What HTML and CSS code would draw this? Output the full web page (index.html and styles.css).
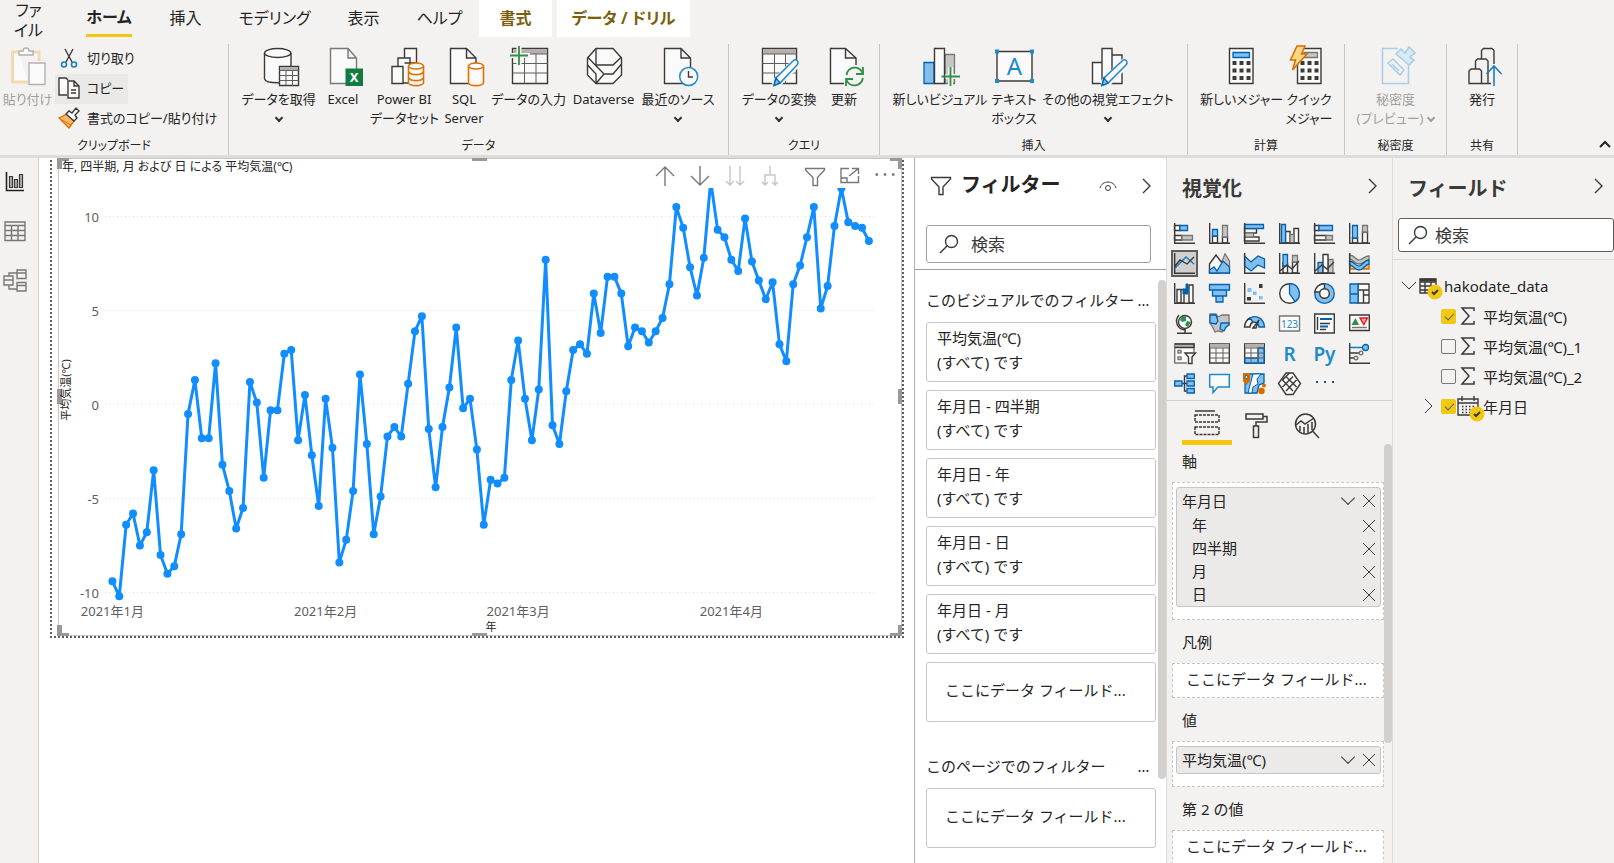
FILE: index.html
```html
<!DOCTYPE html>
<html lang="ja">
<head>
    <meta charset="UTF-8">
    <meta name="viewport" content="width=device-width, initial-scale=1.0">
    <title>hakodate_data - レポート</title>
    <link rel="stylesheet" href="styles.css">
</head>
<body>
    <header class="ribbon">
        <nav class="tabs">
            <button class="tab file">ファ<br>イル</button>
            <button class="tab active"><span>ホーム</span></button>
            <button class="tab">挿入</button>
            <button class="tab">モデリング</button>
            <button class="tab">表示</button>
            <button class="tab">ヘルプ</button>
            <button class="tab context">書式</button>
            <button class="tab context">データ / ドリル</button>
        </nav>
        <div class="groups">
            <section class="group g-clip">
                <div class="group-body">
                    <button class="cmd disabled">
                        <svg viewBox="0 0 40 40"><path class="paste" d="M11 5H4.500V35H20M25 5H31V14"/><path class="off" d="M11 8V4H15C15 0 21 0 21 4H25V8ZM21 16H37V37.500H21Z"/></svg>
                        貼り付け
                    </button>
                    <div class="clip-list">
                        <button class="small">
                            <svg viewBox="0 0 20 20"><path class="k" d="M6 1L13 14M14 1L7 14"/><circle class="bl" cx="5" cy="16.500" r="2.500"/><circle class="bl" cx="15" cy="16.500" r="2.500"/></svg>切り取り
                        </button>
                        <button class="small hover">
                            <svg viewBox="0 0 20 20"><path class="w" d="M8 17H0V0H7L9 2M9 3H15L20 8V20H9ZM15 3V8H20"/><path class="k" d="M12 12H17M12 15H17"/></svg>コピー
                        </button>
                        <button class="small">
                            <svg viewBox="0 0 20 20"><path class="or" d="M0 10L8 6L15 13L10 20Z"/><path class="w" d="M7 6L10 3L13 5L17 0L20 3L16 7L18 10L15 13Z"/><path class="ol thin-ol" d="M3 12L12 17"/></svg>書式のコピー/貼り付け
                        </button>
                    </div>
                </div>
                <h2>クリップボード</h2>
            </section>
            <section class="group g-data">
                <div class="group-body">
                    <button class="cmd">
                        <svg viewBox="0 0 40 40"><path class="w" d="M5.500 6V32C7 37 30 37 32 32V6"/><ellipse class="w" cx="18.700" cy="6" rx="13.200" ry="4.500"/><path class="w" d="M20.500 19.500H39.500V38.500H20.500Z"/><path class="gh" d="M21 20H39V23H21Z"/><path class="k thin" d="M20.500 23.500H39.500M20.500 28.500H39.500M20.500 33.500H39.500M27 23.500V38.500M33.500 23.500V38.500"/></svg>
                        データを取得<i class="down"></i>
                    </button>
                    <button class="cmd">
                        <svg viewBox="0 0 40 40"><path class="w gray" d="M7.500 1.500H25L33.500 11V36.500H7.500ZM25 1.500V11H33.500"/><path class="excel" d="M22.500 21.500H40V39H22.500Z"/><text class="xl" x="31.200" y="35">X</text></svg>
                        Excel
                    </button>
                    <button class="cmd">
                        <svg viewBox="0 0 40 40"><path class="w" d="M20.500 11V1.500H32.500V16H20.500M14 19V11H26V36H19M8 19.500H19V36.500H8Z"/><path class="or2" d="M24.500 19V36C26 39.500 38 39.500 39.500 36V19"/><ellipse class="or2" cx="32" cy="19" rx="7.500" ry="3"/><path class="ol" d="M24.500 25C27 28.500 37 28.500 39.500 25M24.500 31C27 34.500 37 34.500 39.500 31"/></svg>
                        Power BI<br>データセット
                    </button>
                    <button class="cmd">
                        <svg viewBox="0 0 40 40"><path class="w" d="M6.500 1.500H22.500L32 11V36.500H6.500ZM22.500 1.500V11H32"/><path class="or2" d="M24.500 19V36C26 39.500 38 39.500 39.500 36V19"/><ellipse class="or2" cx="32" cy="19" rx="7.500" ry="3"/></svg>
                        SQL<br>Server
                    </button>
                    <button class="cmd">
                        <svg viewBox="0 0 40 40"><path class="w" d="M3.500 1.500H38.500V36.500H3.500Z"/><path class="gh" d="M4 2H38V7H4Z"/><path class="k thin" d="M3.500 7H38.500M3.500 16.500H38.500M3.500 26H38.500M15.500 7V36.500M27 7V36.500"/><path class="halo" d="M10 -1V19M0 8.500H21"/><path class="gr" d="M10 -1V18M1 8.500H19"/></svg>
                        データの入力
                    </button>
                    <button class="cmd">
                        <svg viewBox="0 0 40 40"><path class="w" d="M12 1.500H29L37.500 11V28L29 36.500H12L3.500 28V11Z"/><path class="k" d="M12 1.500V18H29L37.500 10M3.500 10L20 27L12 36.500M20 27H29L37.500 17M3.500 18L12 27V36"/></svg>
                        Dataverse
                    </button>
                    <button class="cmd">
                        <svg viewBox="0 0 40 40"><path class="w" d="M6.500 1.500H23L32.500 11V36.500H6.500ZM23 1.500V11H32.500"/><circle class="wb" cx="30.700" cy="29.500" r="9"/><path class="k" d="M30.500 24V30H35"/></svg>
                        最近のソース<i class="down"></i>
                    </button>
                </div>
                <h2>データ</h2>
            </section>
            <section class="group g-query">
                <div class="group-body">
                    <button class="cmd">
                        <svg viewBox="0 0 40 40"><path class="w" d="M3.500 1.500H37.500V36.500H3.500Z"/><path class="gh" d="M4 2H37V7H4Z"/><path class="k thin" d="M3.500 7H37.500M3.500 16.500H37.500M3.500 26H37.500M15.500 7V36.500M26.500 7V36.500"/><path class="halo2" d="M15 38.500L38 15"/><path class="wb" d="M15 38.500L17 31L34 14C37 11 41 15 38 18L21 36Z"/><path class="bf" d="M15 38.500L17 31L21 36Z"/></svg>
                        データの変換<i class="down"></i>
                    </button>
                    <button class="cmd">
                        <svg viewBox="0 0 40 40"><path class="w" d="M20 36.500H6.500V1.500H21.500L32 11V18M21.500 1.500V11H32"/><path class="gr" d="M22.500 28C24 19 35 18 38.500 26M39 20V27H32M39 31C37 40 26 41 22.500 33M22 39V32H29"/></svg>
                        更新
                    </button>
                </div>
                <h2>クエリ</h2>
            </section>
            <section class="group g-insert">
                <div class="group-body">
                    <button class="cmd">
                        <svg viewBox="0 0 40 40"><path class="gf gray" d="M25 7.500H34.500V36.500H25Z"/><path class="bf" d="M4 15.500H14V36.500H4Z"/><path class="w" d="M14.500 1.500H24.500V36.500H14.500Z"/><path class="halo" d="M30.500 20V39M25.500 29.500H40"/><path class="gr" d="M30.500 20V39M21.500 29.500H40"/></svg>
                        新しいビジュアル
                    </button>
                    <button class="cmd">
                        <svg viewBox="0 0 40 40"><path class="w" d="M3 4.500H38V34H3Z"/><path class="sq" d="M1 2.500H5V6.500H1ZM36 2.500H40V6.500H36ZM1 32H5V36H1ZM36 32H40V36H36Z"/><text class="ta" x="20.500" y="27.500">A</text></svg>
                        テキスト<br>ボックス
                    </button>
                    <button class="cmd">
                        <svg viewBox="0 0 40 40"><path class="w" d="M4.500 15.500H14V36.500H4.500ZM24 8H34V36.500H24ZM14 1.500H24V36.500H14Z"/><path class="halo2" d="M15 38.500L38 15"/><path class="wb" d="M14 38.500L16 31L34 14C37 11 41 15 38 18L20 36Z"/><path class="bf" d="M14 38.500L16 31L20 36Z"/></svg>
                        その他の視覚エフェクト<i class="down"></i>
                    </button>
                </div>
                <h2>挿入</h2>
            </section>
            <section class="group g-calc">
                <div class="group-body">
                    <button class="cmd">
                        <svg viewBox="0 0 40 40"><path class="w" d="M8.500 1.500H32V36.500H8.500Z"/><path class="bf" d="M12 5.500H28.500V10.500H12Z"/><path class="dots" d="M11.500 16H29.500M11.500 23.500H29.500M11.500 31H29.500"/></svg>
                        新しいメジャー
                    </button>
                    <button class="cmd">
                        <svg viewBox="0 0 40 40"><path class="w" d="M8.500 1.500H32V36.500H8.500Z"/><path class="gf gray" d="M15 5.500H28.500V10.500H15Z"/><path class="dots" d="M11.500 16H29.500M11.500 23.500H29.500M11.500 31H29.500"/><path class="bolt" d="M8 -1H16L12.500 7H18L3.500 23L6.500 13H1.500Z"/></svg>
                        クイック<br>メジャー
                    </button>
                </div>
                <h2>計算</h2>
            </section>
            <section class="group g-sens">
                <div class="group-body">
                    <button class="cmd disabled">
                        <svg viewBox="0 0 40 40"><path class="pale" d="M22 1.500H6.500V36.500H32.500V18M12 16L17 12L28 23L24 28ZM16 17L23 24"/><path class="palef" d="M20 7L25 2L29 6L33 0L39 6L34 10L38 13L33 18Z"/></svg>
                        秘密度<br>(プレビュー)<i class="down inline"></i>
                    </button>
                </div>
                <h2>秘密度</h2>
            </section>
            <section class="group g-share">
                <div class="group-body">
                    <button class="cmd">
                        <svg viewBox="0 0 40 40"><path class="k" d="M19.500 12V3.500L21.500 1.500H30L32 3.500V17M13.500 22V14L15.500 12H24L26 14V36.500M19.500 36.500H29"/><path class="k" d="M7 36.500V24L9 22H17.500L19.500 24V36.500Z"/><path class="bl" d="M32 39V19M24.500 27L32 19L39.500 27"/></svg>
                        発行
                    </button>
                </div>
                <h2>共有</h2>
            </section>
            <button class="collapse" aria-label="リボンを折りたたむ"><svg viewBox="0 0 12 8"><path d="M1 7L6 2L11 7"/></svg></button>
        </div>
    </header>

    <main class="workspace">
        <nav class="rail">
            <button aria-label="レポート"><svg viewBox="0 0 24 24"><path class="rk" d="M3.500 2V20.500H21"/><path class="rg" d="M6.500 6.500H9.500V17.500H6.500ZM11.500 9.500H14.500V17.500H11.500ZM16.500 4.500H19.500V17.500H16.500Z"/></svg></button>
            <button aria-label="データ"><svg viewBox="0 0 24 24"><path class="rm" d="M2 3H22V21.500H2ZM2 6.500H22M2 11.500H22M2 16.500H22M8.500 6.500V21.500M15 6.500V21.500"/></svg></button>
            <button aria-label="モデル"><svg viewBox="0 0 24 24"><path class="rm" d="M1 8H10V17H1ZM1 12H10M14 2H23V10.500H14ZM14 5H23M14 14.500H23V23H14ZM14 17.500H23M6 8V5H14M6 17V21H14"/></svg></button>
        </nav>

        <section class="canvas">
            <div class="visual">
                <svg id="chart" viewBox="0 0 856 481"></svg>
                <div class="visual-tools">
                    <button aria-label="ドリルアップ"><svg viewBox="0 0 24 24"><path d="M12 21V2M3 11L12 2L21 11"/></svg></button>
                    <button aria-label="ドリルダウン"><svg viewBox="0 0 24 24"><path d="M12 1V20M3 11L12 20L21 11"/></svg></button>
                    <button class="faint" aria-label="次のレベル"><svg viewBox="0 0 24 24"><path d="M7 1V20M3 16L7 20L11 16M17 1V20M13 16L17 20L21 16"/></svg></button>
                    <button class="faint" aria-label="展開"><svg viewBox="0 0 24 24"><path d="M12 1V10M7 20V10H17V20M4 17L7 20L10 17M14 17L17 20L20 17"/></svg></button>
                    <button class="apart" aria-label="フィルター"><svg viewBox="0 0 24 24"><path d="M2.500 3.500H21.500V5L14.500 12.500V20.500H10V12.500L2.500 5Z"/></svg></button>
                    <button aria-label="フォーカス モード"><svg viewBox="0 0 24 24"><path d="M11 3.500H3V17.500H20.500V11M3 13H9V17.500M11 11L20.500 3.500M14 3.500H20.500V9"/></svg></button>
                    <button aria-label="その他のオプション"><svg viewBox="0 0 24 24"><path class="dot3" d="M2.500 9.500H5M10.800 9.500H13.200M19 9.500H21.500"/></svg></button>
                </div>
            </div>
        </section>

        <aside class="filters">
            <div class="filters-head">
                <svg class="ic-funnel" viewBox="0 0 22 20"><path d="M1.500 1.500H20.500V3L13 11V18.500H9V11L1.500 3Z"/></svg>
                <h2>フィルター</h2>
                <button class="eye" aria-label="表示"><svg viewBox="0 0 18 12"><path d="M1 8C3 0 15 0 17 8"/><circle cx="9" cy="8" r="2.500"/></svg></button>
                <button class="chev" aria-label="閉じる"><svg viewBox="0 0 10 16"><path d="M1 1L8 8L1 15"/></svg></button>
            </div>
            <label class="search">
                <svg viewBox="0 0 20 20"><circle cx="12.500" cy="7.500" r="6"/><path d="M8 12L1 19"/></svg>
                <input type="text" placeholder="検索" aria-label="検索">
            </label>
            <div class="filters-body">
                <div class="filters-title"><h3>このビジュアルでのフィルター</h3><button aria-label="その他">…</button></div>
                <div class="card"><p>平均気温(℃)</p><p>(すべて) です</p></div>
                <div class="card"><p>年月日 - 四半期</p><p>(すべて) です</p></div>
                <div class="card"><p>年月日 - 年</p><p>(すべて) です</p></div>
                <div class="card"><p>年月日 - 日</p><p>(すべて) です</p></div>
                <div class="card"><p>年月日 - 月</p><p>(すべて) です</p></div>
                <div class="card drop">ここにデータ フィールド...</div>
                <div class="filters-title second"><h3>このページでのフィルター</h3><button aria-label="その他">…</button></div>
                <div class="card drop">ここにデータ フィールド...</div>
                <div class="thumb"></div>
            </div>
        </aside>

        <aside class="viz">
            <div class="pane-head"><h2>視覚化</h2><button class="chev" aria-label="閉じる"><svg viewBox="0 0 10 16"><path d="M1 1L8 8L1 15"/></svg></button></div>
            <div class="gallery">
                <button><svg viewBox="0 0 21 21"><path class="w" d="M.5 2.500H6V7.500H.5ZM.5 12.500H8V17H.5Z"/><path class="bf" d="M6 2.500H13.500V7.500H6Z"/><path class="gf gray" d="M8 12.500H18.500V17H8Z"/><path class="k" d="M.7 0V20.300H21"/></svg></button>
                <button><svg viewBox="0 0 21 21"><path class="w" d="M3.500 13H8.500V20H3.500ZM13.500 14H18.500V20H13.500Z"/><path class="bf" d="M3.500 6.500H8.500V13H3.500Z"/><path class="gf gray" d="M13.500 2.500H18.500V14H13.500Z"/><path class="k" d="M.7 0V20.300H21"/></svg></button>
                <button><svg viewBox="0 0 21 21"><path class="w" d="M.5 5.500H12.500V10H.5ZM.5 14H15V18H.5Z"/><path class="gf gray" d="M.5 10H9.500V14H.5Z"/><path class="bf" d="M.5 1.500H19.500V5.500H.5Z"/><path class="k" d="M.7 0V20.300H21"/></svg></button>
                <button><svg viewBox="0 0 21 21"><path class="w" d="M6.500 8.500H11V20H6.500ZM15 5.500H19.500V20H15Z"/><path class="gf gray" d="M11 11.500H15V20H11Z"/><path class="bf" d="M2.500 1.500H6.500V20H2.500Z"/><path class="k" d="M.7 0V20.300H21"/></svg></button>
                <button><svg viewBox="0 0 21 21"><path class="w" d="M.5 2.500H5V7.500H.5ZM.5 12.500H12V17H.5Z"/><path class="bf" d="M5 2.500H18.500V7.500H5Z"/><path class="gf gray" d="M12 12.500H18.500V17H12Z"/><path class="k" d="M.7 0V20.300H21"/></svg></button>
                <button><svg viewBox="0 0 21 21"><path class="w" d="M3.500 15H8.500V20H3.500ZM13.500 9H18.500V20H13.500Z"/><path class="bf" d="M3.500 2.500H8.500V15H3.500Z"/><path class="gf gray" d="M13.500 2.500H18.500V9H13.500Z"/><path class="k" d="M.7 0V20.300H21"/></svg></button>

                <button class="selected"><svg viewBox="0 0 21 21"><path class="bl" d="M1 15L12 4L20 11"/><path class="k" d="M1 13L6 7L13 11L20 4M.7 0V20.300H21"/></svg></button>
                <button><svg viewBox="0 0 21 21"><path class="gf gray" d="M8 20L16 1L20.500 8V20Z"/><path class="w" d="M.5 11L7 2L16 14L10 20H.5Z"/><path class="bf" d="M.5 20V17L5 14L8 18L14 8L20.500 14V20Z"/></svg></button>
                <button><svg viewBox="0 0 21 21"><path class="bf" d="M.5 3L7 9L14 3L20.500 6V15L14 12L7 18L.5 13Z"/><path class="k" d="M.7 0V20.300H21"/></svg></button>
                <button><svg viewBox="0 0 21 21"><path class="w" d="M4 10H8.500V20H4ZM13.500 9H18.500V20H13.500Z"/><path class="bf" d="M4 1.500H8.500V13H4Z"/><path class="gf gray" d="M13.500 2.500H18.500V9H13.500Z"/><path class="k" d="M1 18L8 12L13 16L20 8M.7 0V20.300H21"/></svg></button>
                <button><svg viewBox="0 0 21 21"><path class="bf" d="M4 9.500H9V20H4Z"/><path class="gf gray" d="M14 6.500H19V20H14Z"/><path class="w" d="M9 1.500H14V20H9Z"/><path class="k" d="M1 18L8 12L13 16L20 9M.7 0V20.300H21"/></svg></button>
                <button><svg viewBox="0 0 21 21"><path class="or" d="M1 11H6V16H1ZM14 11H20V16H14Z"/><path class="gf gray" d="M.5 2C6 2 7 8 10.500 7C14 6 16 3 20 3V7C16 7 15 11 10 11C5 11 5 7 .5 6Z"/><path class="bf" d="M.5 8C5 8 7 14 10.500 13C14 12 15 7 20 7V11C16 11 15 17 10 17C5 17 5 12 .5 12Z"/><path class="k" d="M.7 0V20.300H21"/></svg></button>

                <button><svg viewBox="0 0 21 21"><path class="w" d="M3 6.500H7V20H3ZM7 6.500H10V20H7ZM15 2H19V20H15Z"/><path class="blu" d="M9 6H12V11H9ZM12 1H14V11H12Z"/><path class="k" d="M.7 0V20.300H21"/></svg></button>
                <button><svg viewBox="0 0 21 21"><path class="bf" d="M.5 1.500H20.500V7H.5ZM3.500 7H17.500V13H3.500ZM7 13H14V19H7Z"/></svg></button>
                <button><svg viewBox="0 0 21 21"><path class="bd" d="M3.500 5H7.500V9H3.500ZM9 8.500H12.500V12H9ZM15 13H18.500V16.500H15Z"/><path class="kd" d="M15 1H18.500V5H15ZM3 14H7V17.500H3Z"/><path class="k" d="M.7 0V20.300H21"/></svg></button>
                <button><svg viewBox="0 0 21 21"><circle class="w" cx="10.500" cy="10.500" r="9.800"/><path class="bf" d="M10.500 .7A9.800 9.800 0 0 1 16 18.600L10.500 10.500Z"/></svg></button>
                <button><svg viewBox="0 0 21 21"><circle class="bf" cx="10.500" cy="10.500" r="9.800"/><path class="w" d="M10.500 .7A9.800 9.800 0 0 0 .7 9H6L10.500 5Z"/><circle class="w" cx="10.500" cy="10.500" r="4.800"/></svg></button>
                <button><svg viewBox="0 0 21 21"><path class="w" d="M9 1H20V20H9ZM9 7H20M14.500 7V20M14.500 12H20"/><path class="bf" d="M1 1H9V20H1ZM1 11H9"/></svg></button>

                <button><svg viewBox="0 0 21 21"><circle class="w" cx="11" cy="9" r="6.500"/><path class="grf" d="M8 4L12 3L12 8L8 9L6 7ZM13 8L17 9L14 14L11 12Z"/><path class="k" d="M5 2C0 8 3 17 12 17M11 17V20M3 20.200H18"/></svg></button>
                <button><svg viewBox="0 0 21 21"><path class="gf gray" d="M1 1H7L9 4L13 2H20V12L17 14L13 19L9 18L6 19L3 13L1 10Z"/><path class="bf" d="M1 2H7L9 8L7 11L1 10ZM12 10H20V12L17 14L15 18L11 16Z"/></svg></button>
                <button><svg viewBox="0 0 21 21"><path class="w" d="M.5 14C1 8 4 6 6 5L9 9C7 10 6 12 6 14Z"/><path class="bf" d="M6 5C14 1 20 7 20.500 14H15C15 10 11 9 9 9Z"/><path class="k" d="M9 15L15 7L12 15Z"/></svg></button>
                <button><svg viewBox="0 0 21 21"><path class="w gray" d="M.5 3H20.500V18H.5Z"/><text class="num" x="10.500" y="14.500">123</text></svg></button>
                <button><svg viewBox="0 0 21 21"><path class="w" d="M.7 1H20.300V20H.7Z"/><path class="k" d="M3.500 4V17M6 10.500H16M6 16.500H12"/><path class="blu2" d="M6 6H18M6 13.500H14"/></svg></button>
                <button><svg viewBox="0 0 21 21"><path class="w" d="M.7 2H20.300V17.500H.7Z"/><path class="grf" d="M2.500 12L6.500 5L10 12Z"/><path class="rd" d="M11 5H18.500L14.800 11.500Z"/><path class="k gray" d="M3 14.500H18"/></svg></button>

                <button><svg viewBox="0 0 21 21"><path class="w gray" d="M20 9V1H.7V20H13M4 7.500H7V10H4ZM4 14H7V16.500H4Z"/><path class="gh" d="M1 1H20V4H1Z"/><path class="k" d="M.7 1H20V4.500H.7"/><path class="w" d="M11 10H21.500L18 14V20.500H14.500V14Z"/></svg></button>
                <button><svg viewBox="0 0 21 21"><path class="w" d="M.7 1H20.300V20H.7Z"/><path class="gh" d="M1 1H20V4.500H1Z"/><path class="k thin" d="M.7 5H20.300M.7 10H20.300M.7 15H20.300M7 5V20M14 5V20"/></svg></button>
                <button><svg viewBox="0 0 21 21"><path class="w" d="M.7 1H20.300V20H.7Z"/><path class="gh" d="M1 1H20V4.500H1Z"/><path class="bf" d="M1 15H14V20H1ZM14 5H20V20H14Z"/><path class="k thin" d="M.7 5H20.300M.7 10H20.300M.7 15H20.300M7 5V20M14 5V20"/></svg></button>
                <button class="lang">R</button>
                <button class="lang">Py</button>
                <button><svg viewBox="0 0 21 21"><path class="k" d="M.7 0V20.300H21M1 10H10M1 15H5"/><circle class="w gray" cx="12" cy="10" r="1.800"/><circle class="w gray" cx="7" cy="15" r="1.800"/><path class="bl" d="M1 4.500H14"/><circle class="bf" cx="16.500" cy="4.500" r="3"/></svg></button>

                <button><svg viewBox="0 0 21 21"><path class="k" d="M8 10.500H13M13 3H10.500V18H13"/><path class="bf" d="M.7 8H8V13H.7ZM13 1H20.300V5.500H13ZM13 8H20.300V13H13ZM13 15.500H20.300V20H13Z"/></svg></button>
                <button><svg viewBox="0 0 21 21"><path class="wb" d="M.7 1.500H20.300V14H9L4 19.500V14H.7Z"/></svg></button>
                <button><svg viewBox="0 0 21 21"><path class="bf" d="M1 1H20V10L15 12L13 20H1Z"/><path class="w0" d="M9 1H17L13 6L14 11L9 14L8 20H4L6 12Z"/><path class="pin" d="M-1 0H6V8L2.500 12L-1 8Z"/><circle class="pin" cx="17.500" cy="18" r="3.200"/><circle class="pin" cx="20" cy="12.500" r="2"/><circle class="w0" cx="2.500" cy="4" r="1.500"/></svg></button>
                <button><svg viewBox="0 0 21 21"><path class="w" d="M7 0H14L21.500 10.500L14 21.500H7L-.5 10.500Z"/><path class="k" d="M10.500 0L3.500 7L14 18M7 3.500L17.500 14M14 3.500L3.500 14M17.500 7L7 18"/></svg></button>
                <button><svg viewBox="0 0 21 21"><path class="dot4" d="M2 9H4M10 9H12M18 9H20"/></svg></button>
            </div>
            <div class="viz-tabs">
                <button class="active" aria-label="フィールド"><svg viewBox="0 0 26 26"><path d="M1 1H21"/><path class="dash" d="M1 5H25V12H1ZM1 17H25V24.500H1Z"/></svg></button>
                <button aria-label="書式"><svg viewBox="0 0 26 26"><path d="M2 1H19V6H2ZM19 3.500H23V9H12V13M9.500 13H14.500V24.500H9.500Z"/></svg></button>
                <button aria-label="分析"><svg viewBox="0 0 26 26"><circle cx="11.500" cy="11" r="10"/><path d="M18.500 18L25 25M2 12L7 8L11 11L20 5M6 18V13M10 20V14M14 20V11M18 17V9"/></svg></button>
            </div>
            <div class="wells">
                <h3>軸</h3>
                <div class="well">
                    <div class="chip">
                        <div class="row"><span>年月日</span><button class="v" aria-label="メニュー"></button><button class="x" aria-label="削除"></button></div>
                        <div class="row child"><span>年</span><button class="x" aria-label="削除"></button></div>
                        <div class="row child"><span>四半期</span><button class="x" aria-label="削除"></button></div>
                        <div class="row child"><span>月</span><button class="x" aria-label="削除"></button></div>
                        <div class="row child"><span>日</span><button class="x" aria-label="削除"></button></div>
                    </div>
                </div>
                <h3>凡例</h3>
                <div class="well empty">ここにデータ フィールド...</div>
                <h3>値</h3>
                <div class="well">
                    <div class="chip">
                        <div class="row"><span>平均気温(℃)</span><button class="v" aria-label="メニュー"></button><button class="x" aria-label="削除"></button></div>
                    </div>
                </div>
                <h3>第 2 の値</h3>
                <div class="well empty">ここにデータ フィールド...</div>
                <div class="thumb"></div>
            </div>
        </aside>

        <aside class="fields">
            <div class="pane-head"><h2>フィールド</h2><button class="chev" aria-label="閉じる"><svg viewBox="0 0 10 16"><path d="M1 1L8 8L1 15"/></svg></button></div>
            <label class="search">
                <svg viewBox="0 0 20 20"><circle cx="12.500" cy="7.500" r="6"/><path d="M8 12L1 19"/></svg>
                <input type="text" placeholder="検索" aria-label="検索">
            </label>
            <div class="tree">
                <div class="node table">
                    <svg class="tw" viewBox="0 0 16 10"><path d="M1 1L8 8L15 1"/></svg>
                    <span class="badged"><svg class="ic-table" viewBox="0 0 18 16"><path d="M1 1H17V15H1ZM1 4H17M1 8H17M1 12H17M6 4V15M12 4V15"/><path class="top" d="M1 2H17"/></svg><svg class="badge" viewBox="0 0 16 16"><circle cx="8" cy="8" r="7.500"/><path d="M5 8L7 10L11 6"/></svg></span>
                    hakodate_data
                </div>
                <label class="node field"><input type="checkbox" checked><svg class="sigma" viewBox="0 0 14 18"><path d="M13 4V1H1L8 9L1 17H13V14"/></svg>平均気温(℃)</label>
                <label class="node field"><input type="checkbox"><svg class="sigma" viewBox="0 0 14 18"><path d="M13 4V1H1L8 9L1 17H13V14"/></svg>平均気温(℃)_1</label>
                <label class="node field"><input type="checkbox"><svg class="sigma" viewBox="0 0 14 18"><path d="M13 4V1H1L8 9L1 17H13V14"/></svg>平均気温(℃)_2</label>
                <label class="node date"><svg class="tr" viewBox="0 0 10 16"><path d="M1 1L8 8L1 15"/></svg><input type="checkbox" checked><span class="badged cal"><svg class="ic-cal" viewBox="0 0 22 20"><path d="M1 3H21V19H1ZM1 7H21M5 0V5M17 0V5"/><path class="days" d="M5 10.500H18M5 13.500H18M5 16.500H18"/></svg><svg class="badge" viewBox="0 0 16 16"><circle cx="8" cy="8" r="7.500"/><path d="M5 8L7 10L11 6"/></svg></span>年月日</label>
            </div>
        </aside>
    </main>
    <script src="script.js"></script>
</body>
</html>
```
FILE: styles.css
```css
* {
    box-sizing: border-box;
}
body {
    margin: 0;
    height: 100vh;
    display: flex;
    flex-direction: column;
    overflow: hidden;
    background: #fff;
    color: #252423;
    font-family: "Noto Sans", "Noto Sans CJK JP", sans-serif;
    font-size: 15px;
}
h2, h3, p {
    margin: 0;
    font-size: inherit;
    font-weight: normal;
}
button {
    padding: 0;
    border: none;
    background: none;
    color: inherit;
    font: inherit;
    cursor: pointer;
}
svg {
    display: block;
    fill: none;
    stroke: #3b3a38;
    overflow: visible;
}
input {
    font: inherit;
    color: inherit;
}

/* アイコンの色 */
.k { fill: none; stroke: #3b3a38; stroke-width: 1.4; }
.thin { stroke: #605e5c; stroke-width: 1; }
.w { fill: #fafafa; stroke: #3b3a38; stroke-width: 1.4; }
.w0 { fill: #fafafa; stroke: #0063b1; stroke-width: 1; }
.w.gray, .gf.gray, .k.gray { stroke: #797774; }
.wb { fill: #fafafa; stroke: #1e8bcd; stroke-width: 1.5; }
.bl { fill: none; stroke: #1a7fc0; stroke-width: 1.6; }
.bf { fill: #83beec; stroke: #0063b1; stroke-width: 1.3; }
.bd { fill: #83beec; stroke: none; }
.kd { fill: #3b3a38; stroke: none; }
.blu { fill: #0063b1; stroke: #0063b1; stroke-width: 1; }
.blu2 { stroke: #0063b1; stroke-width: 2; }
.gf { fill: #c8c6c4; stroke: #3b3a38; stroke-width: 1.3; }
.gh { fill: #b3b0ad; stroke: none; }
.gr { stroke: #309048; stroke-width: 1.8; }
.grf { fill: #309048; stroke: none; }
.rd { fill: #f8a0a0; stroke: #e02020; stroke-width: 1.4; }
.or { fill: #fbb967; stroke: #d86c00; stroke-width: 1.3; }
.or2 { fill: #fafafa; stroke: #e07000; stroke-width: 1.6; }
.ol { stroke: #e07000; stroke-width: 1.6; }
.thin-ol { stroke-width: 1; }
.bolt { fill: #fcd783; stroke: #d86c00; stroke-width: 1.5; }
.pin { fill: #d86c00; stroke: none; }
.halo { stroke: #f3f2f1; stroke-width: 5; }
.halo2 { stroke: #f3f2f1; stroke-width: 10; }
.paste { fill: #fafafa; stroke: #f3d9b0; stroke-width: 3; }
.off { fill: #fafafa; stroke: #b3b1af; stroke-width: 1.4; }
.pale { fill: none; stroke: #a9cfe6; stroke-width: 1.6; }
.palef { fill: #d9eaf4; stroke: #a9cfe6; stroke-width: 1.6; }
.excel { fill: #107c41; stroke: none; }
.sq { fill: #1e8bcd; stroke: none; }
.dots { stroke: #3b3a38; stroke-width: 4; stroke-dasharray: 4 3; }
.xl { fill: #fff; stroke: none; font-size: 13px; font-weight: bold; text-anchor: middle; }
.ta { fill: #1e8bcd; stroke: none; font-size: 24px; text-anchor: middle; }
.num { fill: #1e8bcd; stroke: none; font-size: 10px; text-anchor: middle; }

/* リボン */
.ribbon {
    flex: none;
    background: #f3f2f1;
    border-bottom: 3px solid #dddcdb;
    font-feature-settings: "palt";
}
.tabs {
    display: grid;
    grid-template-columns: 69px 80px 73px 105px 73px 79px 73px 133px;
    grid-template-rows: 37px;
}
.tab {
    font-size: 16px;
    line-height: 20px;
    padding-bottom: 2px;
    white-space: nowrap;
}
.tab.file {
    align-self: start;
    padding: 0 12px 0 0;
}
.tab.active {
    padding: 0;
    font-weight: bold;
}
.tab.active span {
    display: inline-block;
    line-height: 34px;
    border-bottom: 3px solid #f2c811;
}
.tab.context {
    background: #fff;
    color: #7a6008;
    font-weight: bold;
}
.tab.context:last-child {
    margin-left: 5px;
    margin-right: -5px;
}
.groups {
    display: flex;
    padding-top: 7px;
}
.group {
    height: 111px;
    border-right: 1px solid #c8c6c4;
    font-size: 13px;
}
.group h2 {
    font-size: 12px;
    line-height: 18px;
    text-align: center;
}
.group-body {
    display: grid;
    height: 93px;
    align-items: start;
}
.cmd {
    display: block;
    padding-top: 3px;
    line-height: 19px;
    white-space: nowrap;
    text-align: center;
}
.cmd svg {
    width: 40px;
    height: 40px;
    margin: 0 auto 3px;
}
.cmd.disabled {
    color: #a19f9d;
}
.down {
    display: block;
    width: 6px;
    height: 6px;
    margin: 6px auto 0;
    border-right: 2px solid #323130;
    border-bottom: 2px solid #323130;
    transform: rotate(45deg);
}
.down.inline {
    display: inline-block;
    margin: 0 0 2px 5px;
    border-color: #a19f9d;
}
.g-clip { width: 229px; }
.g-clip .group-body { grid-template-columns: 55px 1fr; }
.g-data { width: 500px; padding: 0 12px; }
.g-data .group-body { grid-template-columns: 75px 54px 68px 52px 77px 73px 76px; }
.g-query { width: 151px; padding: 0 12px; }
.g-query .group-body { grid-template-columns: 76px 54px; }
.g-insert { width: 308px; padding: 0 12px; }
.g-insert .group-body { grid-template-columns: 96px 52px 136px; }
.g-calc { width: 157px; padding: 0 12px; }
.g-calc .group-body { grid-template-columns: 82px 54px; }
.g-sens { width: 102px; }
.g-share { width: 71px; }
.clip-list {
    display: flex;
    flex-direction: column;
    align-items: flex-start;
}
.small {
    display: flex;
    align-items: center;
    gap: 8px;
    height: 30px;
    padding: 0 4px 3px;
    white-space: nowrap;
    font-size: 13px;
}
.small svg {
    width: 20px;
    height: 20px;
}
.small.hover {
    background: #eae9e8;
}
.collapse {
    align-self: flex-end;
    margin-left: auto;
    padding: 0 3px 7px 0;
}
.collapse svg {
    width: 12px;
    height: 8px;
    stroke: #252423;
    stroke-width: 2;
}

/* 本体 */
.workspace {
    flex: 1;
    min-height: 0;
    display: flex;
}
.rail {
    flex: none;
    width: 39px;
    padding: 12px 0 0 3px;
    background: #f3f2f1;
    border-right: 1px solid #d6d5d4;
}
.rail button {
    display: block;
    margin-bottom: 25px;
}
.rail svg {
    width: 24px;
    height: 24px;
}
.rk { stroke: #252423; stroke-width: 1.6; }
.rg { fill: #b3b0ad; stroke: #3b3a38; stroke-width: 1.2; }
.rm { stroke: #797774; stroke-width: 1.4; }
.canvas {
    flex: 1;
    min-width: 0;
    padding: 0 9px 0 10px;
}
.visual {
    position: relative;
}
.visual > svg {
    width: 100%;
    height: auto;
    overflow: hidden;
}
.visual-tools {
    position: absolute;
    top: 7px;
    right: 3px;
    display: flex;
}
.visual-tools button {
    width: 35px;
}
.visual-tools .apart {
    margin-left: 10px;
}
.visual-tools svg {
    width: 24px;
    height: 24px;
    margin: 0 auto;
    stroke: #797774;
    stroke-width: 1.4;
}
.visual-tools .faint svg {
    stroke: #c8c6c4;
}
.visual-tools .dot3 { stroke-width: 2.5; }
.dot4 { stroke: #1f4e79; stroke-width: 2; }

/* グラフ */
.frame { stroke: #c8c6c4; stroke-width: 1; }
.selection { stroke: #605e5c; stroke-width: 2; stroke-dasharray: 2 2; }
.handle { fill: #999; stroke: none; }
.chart-title { fill: #252423; stroke: none; font-size: 12px; font-feature-settings: "palt"; }
.axis-label { fill: #605e5c; stroke: none; font-size: 13px; }
.axis-title { fill: #252423; stroke: none; font-size: 11px; text-anchor: middle; font-feature-settings: "palt"; }
.end { text-anchor: end; }
.mid { text-anchor: middle; }
.grid { stroke: #e1dfdd; stroke-width: 1; stroke-dasharray: 1 3; }
.line { stroke: #118dff; stroke-width: 3; stroke-linejoin: round; }
.point { fill: #118dff; stroke: none; }

/* フィルター */
.filters {
    flex: none;
    width: 252px;
    display: flex;
    flex-direction: column;
    border-left: 1px solid #b3b0ad;
    background: #fff;
}
.filters-head {
    display: flex;
    align-items: center;
    height: 56px;
    padding: 0 14px 0 15px;
}
.filters-head h2, .pane-head h2 {
    flex: 1;
    font-size: 20px;
    line-height: 28px;
    font-weight: bold;
}
.filters-head h2 {
    margin: 0 0 2px 9px;
}
.ic-funnel {
    width: 22px;
    height: 20px;
    stroke-width: 1.4;
}
.eye svg {
    width: 18px;
    height: 12px;
}
.eye {
    margin-right: 25px;
}
.chev svg {
    width: 10px;
    height: 16px;
    stroke-width: 1.4;
}
.search {
    display: flex;
    align-items: center;
    border: 1px solid #a19f9d;
    border-radius: 3px;
    background: #fff;
}
.search svg {
    flex: none;
    width: 20px;
    height: 20px;
    stroke-width: 1.4;
}
.search input {
    flex: 1;
    min-width: 0;
    padding: 0;
    border: none;
    outline: none;
    background: none;
    font-size: 17px;
}
.search input::placeholder {
    color: #3b3a39;
}
.filters .search {
    height: 38px;
    margin: 11px 15px 6px 11px;
    padding-left: 12px;
    gap: 12px;
}
.filters-body {
    position: relative;
    flex: 1;
    min-height: 0;
    overflow: hidden;
    padding: 18px 10px 0 11px;
    border-top: 1px solid #a19f9d;
}
.filters-title {
    display: flex;
    height: 34px;
    line-height: 24px;
    white-space: nowrap;
}
.filters-title h3 {
    flex: 1;
}
.filters-title button {
    width: 15px;
    margin-right: 5px;
    height: 24px;
}
.filters-title.second {
    margin-top: 32px;
}
.card {
    height: 60px;
    margin-bottom: 8px;
    padding: 3px 10px;
    border: 1px solid #c8c6c4;
    border-radius: 3px;
    line-height: 24px;
    white-space: nowrap;
}
.card.drop {
    padding: 0 18px;
    line-height: 54px;
}
.thumb {
    position: absolute;
    right: 0;
    width: 8px;
    border-radius: 4px;
    background: #d2d0ce;
}
.filters .thumb {
    top: 10px;
    height: 499px;
}

/* 視覚化 */
.viz, .fields {
    flex: none;
    display: flex;
    flex-direction: column;
    background: #f3f2f1;
    border-left: 1px solid #dddcdb;
}
.viz {
    width: 226px;
}
.fields {
    width: 222px;
}
.pane-head {
    display: flex;
    align-items: center;
    height: 60px;
    padding: 0 14px 4px 15px;
    color: #3b3a39;
}
.fields .pane-head {
    padding-right: 10px;
}
.pane-head h2 {
    padding-top: 6px;
}
.gallery {
    display: grid;
    grid-template-columns: repeat(6, 35px);
    grid-auto-rows: 30px;
    padding: 2px 0 0 4px;
}
.gallery button {
    width: 27px;
    height: 27px;
    padding: 3px;
}
.gallery .selected {
    padding: 1px;
    border: 2px solid #605e5c;
    background: #d2d0ce;
}
.gallery svg {
    width: 21px;
    height: 21px;
}
.gallery .lang {
    padding: 0;
    color: #1e8bcd;
    font-size: 19px;
    line-height: 24px;
    font-weight: 600;
}
.viz-tabs {
    display: flex;
    height: 44px;
    padding: 9px 0 0 15px;
    border-top: 1px solid #d6d5d4;
}
.viz-tabs button {
    width: 50px;
    height: 35px;
}
.viz-tabs button.active {
    border-bottom: 5px solid #f2c811;
}
.viz-tabs svg {
    width: 26px;
    height: 26px;
    margin: 0 auto 4px;
    stroke-width: 1.5;
}
.dash {
    stroke-dasharray: 3 1;
}
.wells {
    position: relative;
    flex: 1;
    min-height: 0;
    overflow: hidden;
    padding: 0 8px 0 5px;
}
.wells .thumb {
    top: 0;
    height: 299px;
}
.wells h3 {
    margin: 11px 0 10px 10px;
    line-height: 22px;
}
.wells h3:first-child {
    margin-top: 6px;
}
.well {
    padding: 4px 2px 12px 3px;
    border: 1px dashed #c8c6c4;
    background: #fff;
}
.well.empty {
    padding: 0 13px 2px;
    line-height: 31px;
    white-space: nowrap;
}
.chip {
    border: 1px solid #c8c6c4;
    border-radius: 3px;
    background: #ebeae9;
}
.row {
    display: flex;
    align-items: center;
    gap: 8px;
    height: 26px;
    padding: 0 5px;
}
.row.child {
    height: 23px;
    padding-left: 15px;
}
.row span {
    flex: 1;
    padding-bottom: 2px;
}
.v {
    width: 10px;
    height: 10px;
    margin: 0 2px 6px 0;
    border-right: 1px solid #3b3a39;
    border-bottom: 1px solid #3b3a39;
    transform: rotate(45deg);
}
.x {
    width: 12px;
    height: 12px;
    background:
        linear-gradient(45deg, transparent 47%, #3b3a39 47%, #3b3a39 53%, transparent 53%),
        linear-gradient(-45deg, transparent 47%, #3b3a39 47%, #3b3a39 53%, transparent 53%);
}

/* フィールド */
.fields .search {
    height: 34px;
    margin: 0 0 7px 5px;
    padding-left: 9px;
    gap: 7px;
    border-color: #605e5c;
}
.tree {
    padding: 11px 0 0 8px;
    border-top: 1px solid #dddcdb;
    white-space: nowrap;
}
.node {
    display: flex;
    align-items: center;
    height: 30px;
}
.field {
    padding-left: 40px;
}
.date {
    padding-left: 23px;
}
.tw {
    width: 16px;
    height: 10px;
    margin-right: 2px;
}
.tr {
    width: 10px;
    height: 16px;
    margin-right: 7px;
}
.node input {
    appearance: none;
    position: relative;
    width: 15px;
    height: 15px;
    margin: 0;
    border: 1px solid #797774;
    border-radius: 2px;
}
.node input:checked {
    border-color: #f2c811;
    background: #f2c811;
}
.node input:checked::after {
    content: "";
    position: absolute;
    left: 3px;
    top: 3px;
    width: 8px;
    height: 4px;
    border-left: 1px solid #605e5c;
    border-bottom: 1px solid #605e5c;
    transform: rotate(-45deg);
}
.sigma {
    width: 14px;
    height: 18px;
    margin: 0 8px 0 5px;
    stroke-width: 1.5;
}
.badged {
    position: relative;
    margin-right: 7px;
}
.badged.cal {
    margin: 0 4px 0 1px;
}
.badge {
    position: absolute;
    right: -6px;
    bottom: -6px;
    width: 16px;
    height: 16px;
    stroke-width: 2;
}
.badge circle {
    fill: #f2c811;
    stroke: none;
}
.ic-table {
    width: 18px;
    height: 16px;
    stroke-width: 1.4;
}
.ic-table .top {
    stroke-width: 3;
}
.ic-cal {
    width: 22px;
    height: 20px;
    stroke-width: 1.4;
}
.days {
    stroke-dasharray: 1.5 2;
}
```
FILE: script.js
```javascript
// 日別の平均気温 (2021/1/1 から)
const temps = [
    -9.4, -10.2, -6.4, -5.8, -7.5, -6.8, -3.5, -8.0, -9.0, -8.6, -6.9, -0.5, 1.3, -1.8, -1.8, 2.2,
    -3.2, -4.6, -6.6, -5.5, 1.2, 0.1, -3.9, -0.3, -0.3, 2.7, 2.9, -1.9, 0.5, -2.7, -5.4,
    0.3, -2.3, -8.4, -7.2, -4.6, 1.6, -2.1, -6.9, -4.9, -1.7, -1.2, -1.7, 1.1, 3.9, 4.7,
    -1.3, -4.4, -1.2, 0.9, 4.1, -0.2, 0.3, -2.4, -6.4, -4.0, -4.2, -3.9, 1.3,
    3.4, 0.3, -1.9, 0.8, 7.7, -1.1, -2.1, 0.7, 2.9, 3.2, 2.7, 5.9, 3.8, 6.8, 6.8, 5.9,
    3.1, 4.1, 3.9, 3.3, 3.9, 4.6, 6.4, 10.5, 9.4, 7.3, 5.8, 7.8, 11.9, 9.3, 8.9,
    7.7, 7.1, 9.9, 7.6, 6.6, 5.6, 6.5, 3.2, 2.3, 6.4, 7.4, 8.9, 10.5, 5.1, 6.3, 9.5, 11.5, 9.7, 9.5, 9.4, 8.7
];

const svg = document.getElementById('chart');
const x = i => 63.4 + i * 6.877;
const y = t => 246.5 - t * 18.8;

function add(parent, name, attrs, text) {
    const el = document.createElementNS('http://www.w3.org/2000/svg', name);
    for (const key in attrs) el.setAttribute(key, attrs[key]);
    if (text) el.textContent = text;
    parent.appendChild(el);
    return el;
}

// 選択枠とハンドル
add(svg, 'path', { class: 'frame', d: 'M9.500 .5H852.500V477.500H9.500Z' });
add(svg, 'path', { class: 'selection', d: 'M2 2V479H854V0' });
add(svg, 'path', { class: 'handle', d: 'M8 0H20V3H13V11H8ZM423 0H438V3H423ZM841 0H853V11H849V3H841ZM8 231H13V246H8ZM849 231H853V246H849ZM8 467H13V475H20V478H8ZM423 475H438V478H423ZM849 467H853V478H841V475H849Z' });

// 目盛り
[10, 5, 0, -5, -10].forEach(t => {
    add(svg, 'line', { class: 'grid', x1: 56, x2: 827, y1: y(t), y2: y(t) });
    add(svg, 'text', { class: 'axis-label end', x: 50, y: y(t) + 5 }, String(t));
});
[[0, '2021年1月'], [31, '2021年2月'], [59, '2021年3月'], [90, '2021年4月']].forEach(([i, label]) => {
    add(svg, 'text', { class: 'axis-label mid', x: x(i), y: 458 }, label);
});
add(svg, 'text', { class: 'chart-title', x: 13, y: 13 }, '年, 四半期, 月 および 日 による 平均気温(℃)');
add(svg, 'text', { class: 'axis-title', x: 442, y: 473 }, '年');
add(svg, 'text', { class: 'axis-title', transform: 'translate(21 232) rotate(-90)' }, '平均気温(℃)');

// 折れ線
const clip = add(add(svg, 'defs', {}), 'clipPath', { id: 'plot' });
add(clip, 'rect', { x: 50, y: 30, width: 790, height: 415 });
const plot = add(svg, 'g', { 'clip-path': 'url(#plot)' });
add(plot, 'polyline', { class: 'line', points: temps.map((t, i) => x(i) + ',' + y(t)).join(' ') });
temps.forEach((t, i) => add(plot, 'circle', { class: 'point', cx: x(i), cy: y(t), r: 4 }));
```
